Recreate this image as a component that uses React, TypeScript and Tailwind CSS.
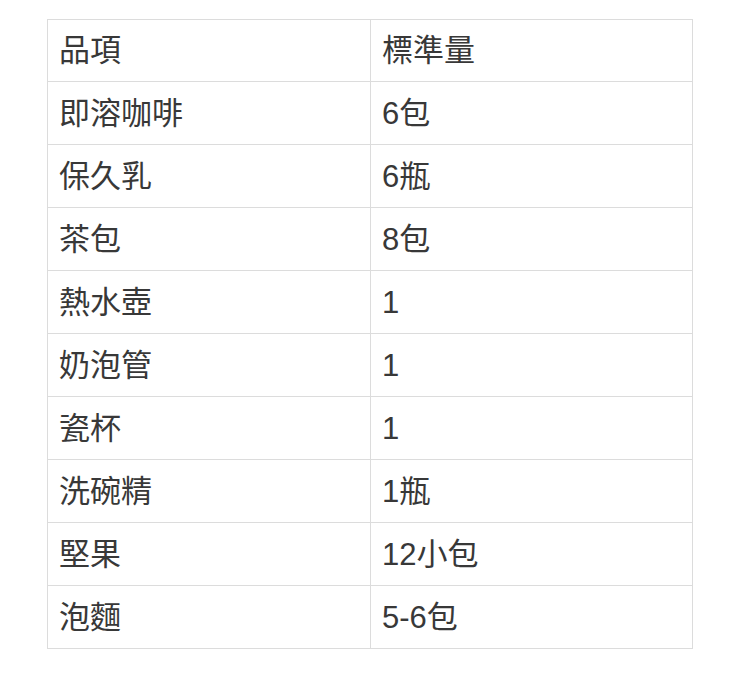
const rows: [string, string][] = [
  ["即溶咖啡", "6包"],
  ["保久乳", "6瓶"],
  ["茶包", "8包"],
  ["熱水壺", "1"],
  ["奶泡管", "1"],
  ["瓷杯", "1"],
  ["洗碗精", "1瓶"],
  ["堅果", "12小包"],
  ["泡麵", "5-6包"],
];

export default function App() {
  return (
    <div
      className="min-h-screen bg-white pt-[19px] pl-[47px]"
      style={{ fontFamily: '"Liberation Sans", "Noto Sans CJK TC", sans-serif' }}
    >
      <table className="w-[646px] border-collapse text-[31px] text-[#383838] leading-none">
        <thead>
          <tr className="h-[62px]">
            <th className="w-[323px] border border-[#dcdcdc] px-[11px] text-left font-normal">品項</th>
            <th className="border border-[#dcdcdc] px-[11px] text-left font-normal">標準量</th>
          </tr>
        </thead>
        <tbody>
          {rows.map(([item, qty]) => (
            <tr key={item} className="h-[63px]">
              <td className="border border-[#dcdcdc] px-[11px]">{item}</td>
              <td className="border border-[#dcdcdc] px-[11px]">{qty}</td>
            </tr>
          ))}
        </tbody>
      </table>
    </div>
  );
}
